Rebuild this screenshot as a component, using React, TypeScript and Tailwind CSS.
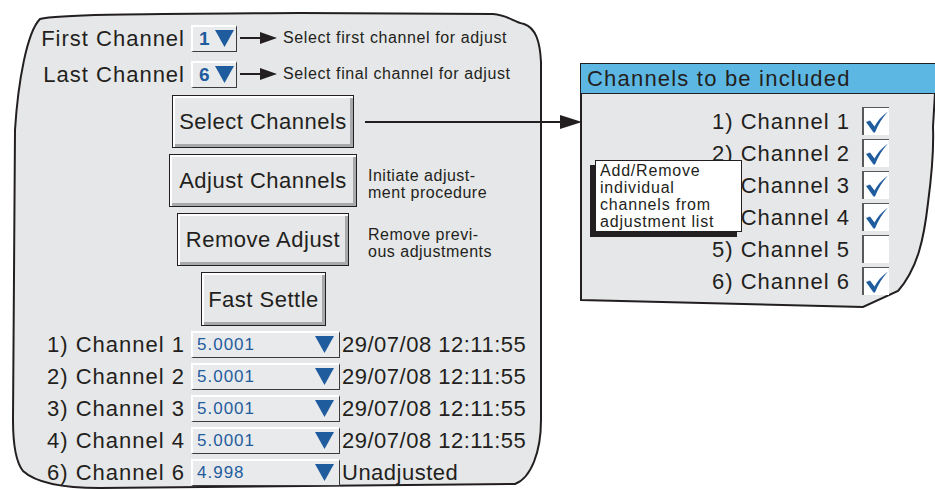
import React from 'react';

const font = { fontFamily: '"Liberation Sans", Arial, sans-serif' };

const values = [
  { label: '1) Channel 1', value: '5.0001', status: '29/07/08 12:11:55' },
  { label: '2) Channel 2', value: '5.0001', status: '29/07/08 12:11:55' },
  { label: '3) Channel 3', value: '5.0001', status: '29/07/08 12:11:55' },
  { label: '4) Channel 4', value: '5.0001', status: '29/07/08 12:11:55' },
  { label: '6) Channel 6', value: '4.998', status: 'Unadjusted' },
];

const included = [
  { label: '1) Channel 1', on: true },
  { label: '2) Channel 2', on: true },
  { label: '3) Channel 3', on: true },
  { label: '4) Channel 4', on: true },
  { label: '5) Channel 5', on: false },
  { label: '6) Channel 6', on: true },
];

function DownTri() {
  return (
    <svg width="19" height="17" viewBox="0 0 19 17" className="shrink-0">
      <polygon points="0,0 19,0 9.5,17" fill="#1f5c9e" />
    </svg>
  );
}

function SmallArrow() {
  return (
    <svg width="40" height="14" viewBox="0 0 40 14" className="shrink-0 ml-[3px]">
      <line x1="0" y1="7" x2="22" y2="7" stroke="#231f20" strokeWidth="2" />
      <polygon points="20,1 37,7 20,13" fill="#231f20" />
    </svg>
  );
}

function Button({ label, cls }: { label: string; cls: string }) {
  return (
    <div
      className={`h-[53px] flex items-center justify-center border border-[#231f20] bg-[#e6e7e8] shadow-[inset_2px_2px_0_#ffffff,inset_-3px_-3px_0_#a7a9ac] text-[22px] text-[#231f20] tracking-[0.5px] ${cls}`}
    >
      {label}
    </div>
  );
}

function Check() {
  return (
    <svg width="24" height="24" viewBox="0 0 24 24">
      <path d="M1,12 L5,10.5 L9.5,16.5 Q14,8 23,1.5 Q15,10 10,22.5 L8.5,22.5 Z" fill="#1f5c9e" />
    </svg>
  );
}

export default function App() {
  return (
    <div className="relative w-[935px] h-[490px] bg-white overflow-hidden text-[#231f20]" style={font}>
      <div className="flex">
        {/* left panel */}
        <div className="relative w-[545px] h-[490px] shrink-0">
          <svg className="absolute inset-0" width="545" height="490" viewBox="0 0 545 490">
            <path
              d="M40,19 C60,14 150,14 300,13 L493,14 C508,15 513,22 524,24 C536,28 540,42 541,62 L541,420 C541,452 531,478 515,484 L100,488 C62,488 36,483 23,471 C15,461 13,442 13,420 L15,130 C18,82 27,32 40,19 Z"
              fill="#e6e7e8"
              stroke="#231f20"
              strokeWidth="2"
            />
          </svg>
          <div className="relative pt-[20px] flex flex-col">
            {[
              { label: 'First Channel', n: '1', hint: 'Select first channel for adjust' },
              { label: 'Last Channel', n: '6', hint: 'Select final channel for adjust' },
            ].map((r) => (
              <div key={r.label} className="h-[36px] flex items-center">
                <div className="w-[186px] text-right text-[22px] tracking-[1px] pr-[1px]">{r.label}</div>
                <div className="ml-[5px] w-[46px] h-[27px] flex items-center gap-[4px] pl-[6px] bg-[#e9eaeb] border-t-2 border-l-2 border-white border-b border-r border-b-[#3c3c3c] border-r-[#3c3c3c]">
                  <span className="text-[19px] font-bold text-[#1f5c9e] leading-none w-[12px]">{r.n}</span>
                  <DownTri />
                </div>
                <SmallArrow />
                <span className="ml-[3px] text-[16px] tracking-[0.6px]">{r.hint}</span>
              </div>
            ))}

            <div className="mt-[3px] flex items-center">
              <Button label="Select Channels" cls="ml-[172px] w-[182px]" />
            </div>
            <div className="mt-[6px] flex items-center">
              <Button label="Adjust Channels" cls="ml-[169px] w-[188px]" />
              <div className="ml-[11px] text-[16px] leading-[17px] pt-[6px] tracking-[0.5px]">
                Initiate adjust-
                <br />
                ment procedure
              </div>
            </div>
            <div className="mt-[6px] flex items-center">
              <Button label="Remove Adjust" cls="ml-[177px] w-[172px]" />
              <div className="ml-[19px] text-[16px] leading-[17px] pt-[6px] tracking-[0.5px]">
                Remove previ-
                <br />
                ous adjustments
              </div>
            </div>
            <div className="mt-[6px] flex items-center">
              <Button label="Fast Settle" cls="ml-[201px] w-[125px] h-[54px]" />
            </div>

            <div className="mt-[2px] flex flex-col">
              {values.map((v) => (
                <div key={v.label} className="h-[32px] flex items-center">
                  <div className="w-[186px] text-right text-[22px] tracking-[1px] pr-[1px]">{v.label}</div>
                  <div className="ml-[5px] w-[149px] h-[27px] flex items-center justify-between pl-[4px] pr-[5px] bg-[#e9eaeb] border-t-2 border-l-2 border-white border-b border-r border-b-[#3c3c3c] border-r-[#3c3c3c]">
                    <span className="text-[17px] tracking-[1px] text-[#1f5c9e]">{v.value}</span>
                    <DownTri />
                  </div>
                  <span className="ml-[2px] text-[22px] tracking-[0.5px]">{v.status}</span>
                </div>
              ))}
            </div>
          </div>
        </div>

        {/* right panel */}
        <div className="relative ml-[35px] mt-[63px] w-[355px] h-[250px] shrink-0">
          <svg className="absolute inset-0" width="355" height="250" viewBox="0 0 355 250">
            <path
              d="M1,30 L355,30 L353,64 C354,90 352,110 348,140 C344,175 338,205 318,228 L283,244 L1,237 Z"
              fill="#e6e7e8"
              stroke="#231f20"
              strokeWidth="2"
            />
          </svg>
          <div className="relative h-[31px] bg-[#5db7e3] border border-[#231f20] border-r-0 pl-[6px] flex items-center text-[22px] tracking-[1.2px]">
            Channels to be included
          </div>
          <div className="relative pt-[11px] flex flex-col">
            {included.map((c) => (
              <div key={c.label} className="h-[32px] flex items-center">
                <div className="w-[270px] text-right text-[22px] tracking-[1px]">{c.label}</div>
                <div className="ml-[12px] w-[27px] h-[28px] bg-white border-t border-l-2 border-[#58595b] flex items-center justify-center">
                  {c.on && <Check />}
                </div>
              </div>
            ))}
          </div>
          <div className="absolute left-[15px] top-[97px] w-[147px] h-[72px] bg-white border border-[#231f20] shadow-[-5px_5px_0_#231f20] pl-[4px] pt-[1px] text-[16px] leading-[17px] tracking-[0.8px]">
            Add/Remove
            <br />
            individual
            <br />
            channels from
            <br />
            adjustment list
          </div>
        </div>
      </div>

      {/* connector from Select Channels to the list */}
      <svg className="absolute left-0 top-0 pointer-events-none" width="935" height="490" viewBox="0 0 935 490">
        <line x1="365" y1="122" x2="565" y2="122" stroke="#231f20" strokeWidth="2" />
        <polygon points="560,115 582,122 560,129" fill="#231f20" />
      </svg>
    </div>
  );
}
